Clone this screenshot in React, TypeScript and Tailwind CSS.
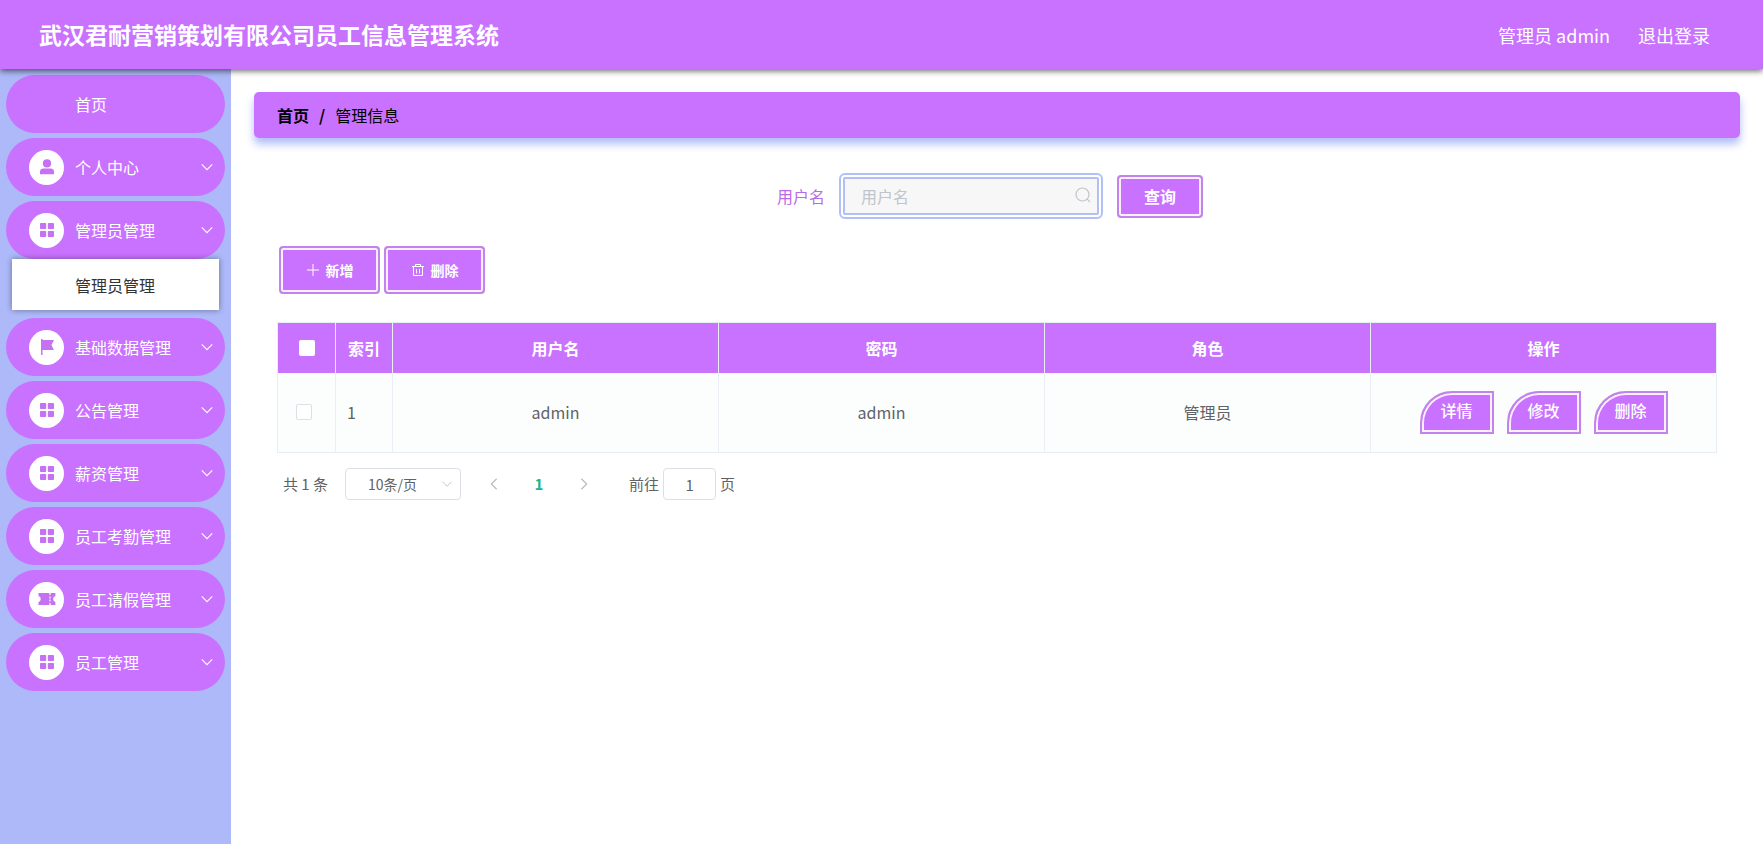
import React, { useState } from 'react';

type IconName = 'user' | 'grid' | 'flag' | 'ticket';

interface MenuItem {
  label: string;
  icon?: IconName;
  children?: string[];
}

const menu: MenuItem[] = [
  { label: '首页' },
  { label: '个人中心', icon: 'user' },
  { label: '管理员管理', icon: 'grid', children: ['管理员管理'] },
  { label: '基础数据管理', icon: 'flag' },
  { label: '公告管理', icon: 'grid' },
  { label: '薪资管理', icon: 'grid' },
  { label: '员工考勤管理', icon: 'grid' },
  { label: '员工请假管理', icon: 'ticket' },
  { label: '员工管理', icon: 'grid' },
];

const users = [{ id: 1, username: 'admin', password: 'admin', role: '管理员' }];

// Outer line, light gap, then the fill
const framed = 'border-2 border-[#c283ec] bg-[#c972ff] shadow-[inset_0_0_0_2px_#fcf0ff] text-white';

const MenuIcon: React.FC<{ name: IconName }> = ({ name }) => (
  <span className="flex h-[35px] w-[35px] shrink-0 items-center justify-center rounded-full bg-white text-[#c471f2]">
    <svg viewBox="0 0 18 18" className="h-[18px] w-[18px]" fill="currentColor" aria-hidden="true">
      {name === 'user' && (
        <>
          <circle cx="9" cy="5.4" r="4.1" />
          <path d="M2 16.2v-2.4c0-2 1.5-3.2 3.4-3.2h7.2c1.9 0 3.4 1.2 3.4 3.2v2.4z" />
        </>
      )}
      {name === 'grid' && (
        <>
          <rect x="2" y="2" width="6.2" height="6" rx="0.8" />
          <rect x="9.8" y="2" width="6.2" height="6" rx="0.8" />
          <rect x="2" y="10" width="6.2" height="6" rx="0.8" />
          <rect x="9.8" y="10" width="6.2" height="6" rx="0.8" />
        </>
      )}
      {name === 'flag' && <path d="M3 1h1.5v1H16l-2.6 5 2.6 5H4.5v5H3z" />}
      {name === 'ticket' && (
        <path
          fillRule="evenodd"
          d="M.5 3h16.9v3.1a3 3 0 0 0 0 5.8V15H.5v-3.1a3 3 0 0 0 0-5.8zM11.4 3v2h1.2V3zm0 3.4v2h1.2v-2zm0 3.2v2h1.2v-2zm0 3.4v2h1.2v-2z"
        />
      )}
    </svg>
  </span>
);

const Chevron: React.FC<{ className?: string; d?: string }> = ({ className, d = 'M2 5l6 6 6-6' }) => (
  <svg viewBox="0 0 16 16" className={className} fill="none" stroke="currentColor" strokeWidth="1.3" aria-hidden="true">
    <path d={d} />
  </svg>
);

const App: React.FC = () => {
  const [keyword, setKeyword] = useState('');
  const [page, setPage] = useState('1');

  return (
    <div className="flex min-h-screen flex-col bg-white font-['Noto_Sans_CJK_SC',sans-serif] text-base text-[#606266]">
      <header className="z-10 flex h-[69px] items-center justify-between bg-[#c972ff] pr-[53px] pl-[39px] text-white shadow-[0_2px_6px_rgba(0,0,0,0.6)]">
        <h1 className="text-[23px] font-bold">武汉君耐营销策划有限公司员工信息管理系统</h1>
        <div className="flex gap-7 text-lg">
          <span>管理员 admin</span>
          <a href="#logout">退出登录</a>
        </div>
      </header>

      <div className="flex flex-1">
        <nav className="w-[231px] shrink-0 bg-[#adb9f8] px-1.5 pt-1.5">
          <ul className="flex flex-col gap-[5px]">
            {menu.map((item) => (
              <li key={item.label}>
                <button type="button" className="flex h-[58px] w-full items-center rounded-full bg-[#c972ff] pr-[11px] pl-[23px] text-white">
                  {item.icon ? <MenuIcon name={item.icon} /> : <span className="w-[35px]" />}
                  <span className="ml-[11px] flex-1 text-left">{item.label}</span>
                  {item.icon && <Chevron className="h-3.5 w-3.5" />}
                </button>
                {item.children?.map((child) => (
                  <a
                    key={child}
                    href="#admins"
                    className="relative mx-1.5 mb-[3px] flex h-[51px] items-center bg-white pl-[63px] text-[#333] shadow-[0_0_6px_rgba(0,0,0,0.4)]"
                  >
                    {child}
                  </a>
                ))}
              </li>
            ))}
          </ul>
        </nav>

        <main className="min-w-0 flex-1 px-[23px] pt-[23px]">
          <div className="flex h-[46px] items-center gap-2.5 rounded-[5px] bg-[#c972ff] px-[23px] text-black shadow-[0_6px_8px_#b0bdf8]">
            <a href="#home" className="font-bold">首页</a>
            <span className="font-bold">/</span>
            <span>管理信息</span>
          </div>

          <div className="px-[23px]">
            <form className="mt-[35px] flex items-center justify-center pr-3.5" onSubmit={(e) => e.preventDefault()}>
              <label htmlFor="username" className="mr-3.5 text-[#b96be8]">用户名</label>
              <div className="relative mr-3.5">
                <input
                  id="username"
                  value={keyword}
                  onChange={(e) => setKeyword(e.target.value)}
                  placeholder="用户名"
                  className="block h-[46px] w-[264px] rounded-md border-[6px] border-double border-[#b3c0f5] bg-[#f7f7f7] bg-clip-padding pr-8 pl-4 placeholder:text-[#c0c4cc]"
                />
                <svg viewBox="0 0 16 16" className="absolute top-3.5 right-3 h-4 w-4 text-[#c0c4cc]" fill="none" stroke="currentColor" strokeWidth="1.2" aria-hidden="true">
                  <circle cx="7.5" cy="7.5" r="6.5" />
                  <path d="M12.2 12.2l3 3" />
                </svg>
              </div>
              <button type="submit" className={`h-[43px] w-[86px] rounded font-bold ${framed}`}>
                查询
              </button>
            </form>

            <div className="mt-[27px] flex gap-1 pl-0.5 text-sm font-bold">
              <button type="button" className={`flex h-12 w-[101px] items-center justify-center gap-1.5 rounded ${framed}`}>
                <svg viewBox="0 0 14 14" className="h-3.5 w-3.5" fill="none" stroke="currentColor" aria-hidden="true">
                  <path d="M7 1v12M1 7h12" />
                </svg>
                新增
              </button>
              <button type="button" className={`flex h-12 w-[101px] items-center justify-center gap-1.5 rounded ${framed}`}>
                <svg viewBox="0 0 14 14" className="h-3.5 w-3.5" fill="none" stroke="currentColor" aria-hidden="true">
                  <path d="M1 3.5h12M4.5 3.5v-2h5v2M2.5 3.5v9h9v-9M5.5 6v4.5M8.5 6v4.5" />
                </svg>
                删除
              </button>
            </div>

            <table className="mt-7 w-full table-fixed border-collapse border border-[#e8eef6] bg-[#fbfefd] text-center">
              <colgroup>
                <col className="w-[58px]" />
                <col className="w-[57px]" />
                <col />
                <col />
                <col />
                <col className="w-[346px]" />
              </colgroup>
              <thead>
                <tr className="h-[50px] bg-[#c972ff] text-white">
                  <th className="border-r border-[#ebeef5]">
                    <input type="checkbox" aria-label="全选" className="mx-auto block h-4 w-4 appearance-none rounded-xs bg-white" />
                  </th>
                  <th className="border-r border-[#ebeef5]">索引</th>
                  <th className="border-r border-[#ebeef5]">用户名</th>
                  <th className="border-r border-[#ebeef5]">密码</th>
                  <th className="border-r border-[#ebeef5]">角色</th>
                  <th>操作</th>
                </tr>
              </thead>
              <tbody>
                {users.map((user) => (
                  <tr key={user.id} className="h-20">
                    <td className="border-r border-[#ebeef5]">
                      <input type="checkbox" aria-label={user.username} className="ml-[18px] block h-4 w-4 appearance-none rounded-xs border border-[#dcdfe6] bg-white" />
                    </td>
                    <td className="border-r border-[#ebeef5] pl-[11px] text-left">{user.id}</td>
                    <td className="border-r border-[#ebeef5]">{user.username}</td>
                    <td className="border-r border-[#ebeef5]">{user.password}</td>
                    <td className="border-r border-[#ebeef5]">{user.role}</td>
                    <td>
                      <div className="flex justify-center gap-[13px] font-medium">
                        {['详情', '修改', '删除'].map((action) => (
                          <button key={action} type="button" className={`h-[43px] w-[74px] rounded-tl-[32px] pb-1 ${framed}`}>
                            {action}
                          </button>
                        ))}
                      </div>
                    </td>
                  </tr>
                ))}
              </tbody>
            </table>

            <div className="mt-[15px] flex h-8 items-center pl-1.5 text-[15px]">
              <span>共 1 条</span>
              <div className="relative ml-[17px]">
                <select aria-label="每页条数" className="block h-8 w-[116px] appearance-none rounded border border-[#dcdfe6] bg-white pl-[22px] text-sm">
                  <option>10条/页</option>
                </select>
                <Chevron className="pointer-events-none absolute top-2.5 right-2 h-3 w-3 text-[#c0c4cc]" />
              </div>
              <div className="ml-[26px] flex items-center gap-[31px]">
                <button type="button" aria-label="上一页" className="text-[#b4b8c0]">
                  <Chevron d="M11 2L5 8l6 6" className="h-3.5 w-3.5" />
                </button>
                <button type="button" className="w-3.5 font-bold text-[#1ab394]">1</button>
                <button type="button" aria-label="下一页" className="text-[#b4b8c0]">
                  <Chevron d="M5 2l6 6-6 6" className="h-3.5 w-3.5" />
                </button>
              </div>
              <label htmlFor="page" className="ml-[38px]">前往</label>
              <input
                id="page"
                value={page}
                onChange={(e) => setPage(e.target.value)}
                className="mx-1 h-8 w-[53px] rounded border border-[#dcdfe6] bg-white text-center"
              />
              <span>页</span>
            </div>
          </div>
        </main>
      </div>
    </div>
  );
};

export default App;
